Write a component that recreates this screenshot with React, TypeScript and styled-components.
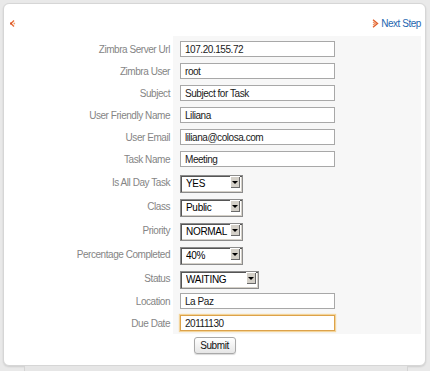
import React from 'react';
import styled, { createGlobalStyle } from 'styled-components';

const GlobalStyle = createGlobalStyle`
  body {
    margin: 0;
    background: #e9e9e9;
    font-family: "Liberation Sans", Arial, sans-serif;
  }
`;

type Field =
  | { label: string; kind: 'text'; value: string; highlight?: boolean }
  | { label: string; kind: 'select'; value: string; options: string[]; width: number };

const fields: Field[] = [
  { label: 'Zimbra Server Url', kind: 'text', value: '107.20.155.72' },
  { label: 'Zimbra User', kind: 'text', value: 'root' },
  { label: 'Subject', kind: 'text', value: 'Subject for Task' },
  { label: 'User Friendly Name', kind: 'text', value: 'Liliana' },
  { label: 'User Email', kind: 'text', value: 'liliana@colosa.com' },
  { label: 'Task Name', kind: 'text', value: 'Meeting' },
  { label: 'Is All Day Task', kind: 'select', value: 'YES', options: ['YES', 'NO'], width: 63 },
  { label: 'Class', kind: 'select', value: 'Public', options: ['Public', 'Private'], width: 63 },
  { label: 'Priority', kind: 'select', value: 'NORMAL', options: ['LOW', 'NORMAL', 'HIGH'], width: 63 },
  {
    label: 'Percentage Completed',
    kind: 'select',
    value: '40%',
    options: ['0%', '20%', '40%', '60%', '80%', '100%'],
    width: 63,
  },
  {
    label: 'Status',
    kind: 'select',
    value: 'WAITING',
    options: ['NOT STARTED', 'IN PROGRESS', 'WAITING', 'COMPLETED'],
    width: 79,
  },
  { label: 'Location', kind: 'text', value: 'La Paz' },
  { label: 'Due Date', kind: 'text', value: '20111130', highlight: true },
];

const BackIcon = () => (
  <svg width="7" height="9" viewBox="0 0 7 9">
    <path d="M5 1.5 L2 4.5 L5 7.5" fill="none" stroke="#e8703a" strokeWidth="1.4" />
    <rect x="1" y="3.5" width="2" height="2" fill="#d9552a" />
    <rect x="4.5" y="3.7" width="1.6" height="1.6" fill="#f0a070" />
  </svg>
);

const NextIcon = () => (
  <svg width="7" height="9" viewBox="0 0 7 9">
    <path d="M1 0.8 L5.5 4.5 L1 8.2" fill="none" stroke="#e0602c" strokeWidth="1.4" />
    <path d="M1 3 L3.2 4.5 L1 6" fill="none" stroke="#f09060" strokeWidth="1.2" />
  </svg>
);

const App: React.FC = () => {
  return (
    <>
      <GlobalStyle />
      <Page>
        <Panel>
          <Header>
            <IconLink href="#">
              <BackIcon />
            </IconLink>
            <NextLink href="#">
              <NextIcon />
              Next Step
            </NextLink>
          </Header>
          <FormGrid>
            {fields.map((f) => (
              <React.Fragment key={f.label}>
                <Label $tall={f.kind === 'select'}>{f.label}</Label>
                <Value $tall={f.kind === 'select'}>
                  {f.kind === 'text' ? (
                    <TextInput defaultValue={f.value} $highlight={!!f.highlight} />
                  ) : (
                    <SelectWrap style={{ width: f.width }}>
                      <Select defaultValue={f.value}>
                        {f.options.map((o) => (
                          <option key={o}>{o}</option>
                        ))}
                      </Select>
                      <ArrowButton>
                        <ArrowTriangle />
                      </ArrowButton>
                    </SelectWrap>
                  )}
                </Value>
              </React.Fragment>
            ))}
          </FormGrid>
          <ButtonRow>
            <SubmitButton type="button">Submit</SubmitButton>
          </ButtonRow>
        </Panel>
        <BackSheet />
      </Page>
    </>
  );
};

export default App;

const Page = styled.div`
  padding: 3px 4px 0 3px;
`;

const Panel = styled.div`
  height: 363px;
  box-sizing: border-box;
  background: #fff;
  border: 1px solid #d6d6d6;
  border-radius: 6px;
  box-shadow: 0 1px 2px rgba(0, 0, 0, 0.12);
`;

const Header = styled.div`
  display: flex;
  justify-content: space-between;
  align-items: center;
  height: 32px;
  padding: 6px 4px 0 5px;
  box-sizing: border-box;
`;

const IconLink = styled.a`
  display: flex;
  line-height: 0;
`;

const NextLink = styled.a`
  display: flex;
  align-items: center;
  gap: 2px;
  font-size: 10px;
  letter-spacing: -0.45px;
  color: #2466b0;
  text-decoration: none;
`;

const FormGrid = styled.div`
  display: grid;
  grid-template-columns: 169px 248px;
  padding-right: 4px;
`;

const Label = styled.div<{ $tall: boolean }>`
  height: ${(p) => (p.$tall ? 24 : 22)}px;
  display: flex;
  align-items: center;
  justify-content: flex-end;
  padding-right: 3px;
  font-size: 10px;
  letter-spacing: -0.45px;
  color: #858585;
  &:first-child {
    margin-top: 2px;
  }
`;

const Value = styled.div<{ $tall: boolean }>`
  height: ${(p) => (p.$tall ? 24 : 22)}px;
  display: flex;
  align-items: center;
  padding-left: 7px;
  background: #f7f7f7;
  &:nth-child(2) {
    height: ${(p) => (p.$tall ? 26 : 24)}px;
    padding-top: 2px;
    box-sizing: border-box;
  }
`;

const TextInput = styled.input<{ $highlight: boolean }>`
  width: 155px;
  height: 16px;
  box-sizing: border-box;
  margin: 0;
  padding: 0 4px;
  border: 1px solid ${(p) => (p.$highlight ? '#dca24a' : '#a8a8a8')};
  box-shadow: ${(p) => (p.$highlight ? '0 0 1px 1px #f3d49a' : 'none')};
  background: #fff;
  font-family: "Liberation Sans", Arial, sans-serif;
  font-size: 10px;
  letter-spacing: -0.45px;
  color: #1a1a1a;
  outline: none;
`;

const SelectWrap = styled.div`
  position: relative;
  height: 18px;
`;

const Select = styled.select`
  appearance: none;
  width: 100%;
  height: 18px;
  box-sizing: border-box;
  margin: 0;
  padding: 0 0 0 5px;
  border: 1px solid #8c8c8c;
  box-shadow: inset 1px 1px 0 #555, inset -1px -1px 0 #d4d0c8;
  border-radius: 0;
  background: #fff;
  font-family: "Liberation Sans", Arial, sans-serif;
  font-size: 10px;
  letter-spacing: -0.3px;
  color: #000;
  outline: none;
`;

const ArrowButton = styled.span`
  position: absolute;
  top: 3px;
  right: 3px;
  width: 10px;
  height: 12px;
  background: #d4d0c8;
  box-shadow: inset 1px 1px 0 #fff, inset -1px -1px 0 #6a6a6a;
  display: flex;
  align-items: center;
  justify-content: center;
  pointer-events: none;
`;

const ArrowTriangle = styled.span`
  width: 0;
  height: 0;
  border-left: 3px solid transparent;
  border-right: 3px solid transparent;
  border-top: 3px solid #000;
`;

const ButtonRow = styled.div`
  display: flex;
  justify-content: center;
  padding-top: 3px;
`;

const SubmitButton = styled.button`
  width: 42px;
  height: 17px;
  padding: 0;
  border: 1px solid #a9a9a9;
  border-radius: 3px;
  background: linear-gradient(#ffffff, #e6e6e6);
  box-shadow: 0 1px 1px rgba(0, 0, 0, 0.15);
  font-family: "Liberation Sans", Arial, sans-serif;
  font-size: 10px;
  letter-spacing: -0.4px;
  color: #111;
`;

const BackSheet = styled.div`
  height: 6px;
  margin: 0 18px 0 21px;
  border-left: 1px solid #d4d4d4;
  border-right: 1px solid #d4d4d4;
  background: #e6e6e6;
`;
